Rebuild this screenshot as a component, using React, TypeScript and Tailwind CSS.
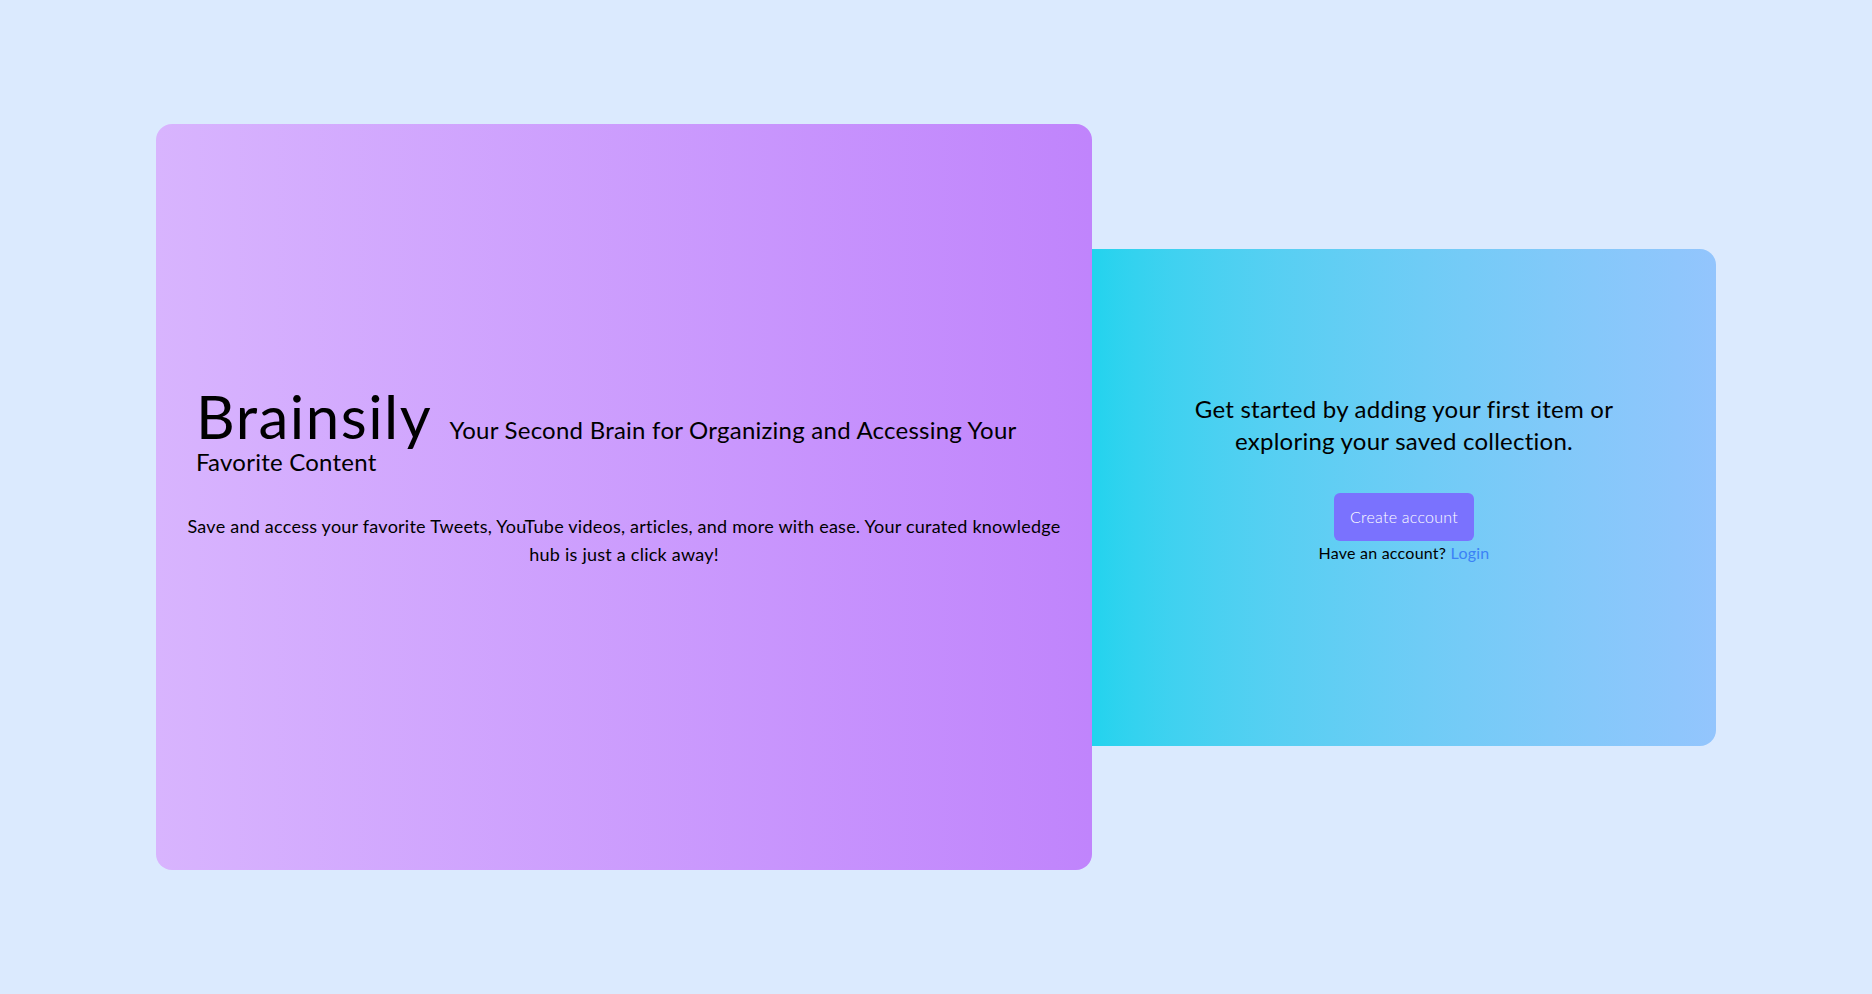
export default function App() {
  return (
    <div className="flex min-h-screen items-center justify-center bg-[#dbeafe] font-['Lato',_'Liberation_Sans',_sans-serif] tracking-[0.015em] text-black">
      {/* Left card — brand + pitch */}
      <div className="flex h-[75vh] w-1/2 flex-col justify-center rounded-2xl bg-linear-to-r from-[#d8b4fe] to-[#c084fc] px-6 pb-10">
        <h1 className="px-4 text-2xl">
          <span className="mr-3 text-6xl leading-none tracking-[0.025em]">Brainsily</span> Your
          Second Brain for Organizing and Accessing Your Favorite Content
        </h1>
        <p className="mt-[34px] text-center text-lg">
          Save and access your favorite Tweets, YouTube videos, articles, and more with ease. Your
          curated knowledge hub is just a click away!
        </p>
      </div>

      {/* Right card — call to action */}
      <div className="flex h-[50vh] w-1/3 flex-col items-center justify-center rounded-r-2xl bg-linear-to-r from-[#22d3ee] to-[#93c5fd] pb-9">
        <h2 className="max-w-[450px] text-center text-2xl">
          Get started by adding your first item or exploring your saved collection.
        </h2>
        <button className="mt-9 rounded-md bg-[#7a72fe] px-4 py-3 text-base font-light text-white">
          Create account
        </button>
        <p className="text-base">
          Have an account? <a className="cursor-pointer text-[#3b82f6]">Login</a>
        </p>
      </div>
    </div>
  );
}
